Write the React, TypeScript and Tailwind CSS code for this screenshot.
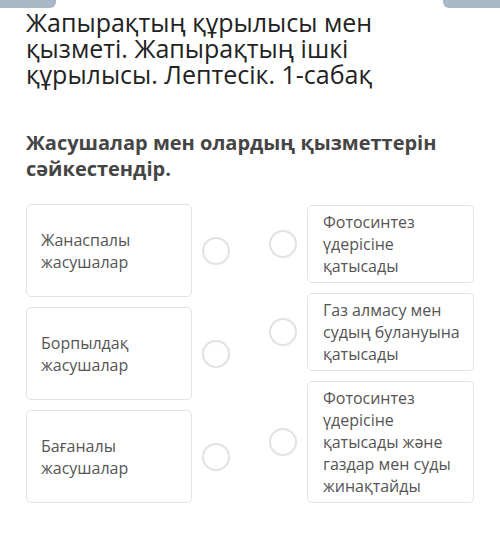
const leftItems = ['Жанаспалы жасушалар', 'Борпылдақ жасушалар', 'Бағаналы жасушалар'];

const rightItems = [
  'Фотосинтез үдерісіне қатысады',
  'Газ алмасу мен судың булануына қатысады',
  'Фотосинтез үдерісіне қатысады және газдар мен суды жинақтайды',
];

function Dot() {
  return <div className="w-[28px] h-[28px] shrink-0 rounded-full border-2 border-[#e2e2e2] bg-white" />;
}

export default function App() {
  return (
    <div className="w-[500px] h-[546px] bg-white overflow-hidden" style={{ fontFamily: '"Open Sans", "Noto Sans", sans-serif' }}>
      {/* top tabs, cut off by the scroll */}
      <div className="flex justify-between h-[8px]">
        <div className="w-[56px] h-full bg-[#a9b8c6] rounded-br-[6px]" />
        <div className="w-[57px] h-full bg-[#a9b8c6] rounded-bl-[6px]" />
      </div>

      <div className="px-[26px]">
        <h1 className="mt-[1px] text-[25px] leading-[26px] text-[#222] font-normal">
          Жапырақтың құрылысы мен қызметі. Жапырақтың ішкі құрылысы. Лептесік. 1-сабақ
        </h1>

        <h2 className="mt-[43px] text-[20px] leading-[26px] font-bold text-[#454545]">
          Жасушалар мен олардың қызметтерін сәйкестендір.
        </h2>

        {/* matching pairs */}
        <div className="mt-[22px] flex">
          <div className="w-[166px] flex flex-col gap-[10px]">
            {leftItems.map(t => (
              <div key={t} className="flex-1 flex items-center px-[14px] border border-[#e3e3e3] rounded-[5px] text-[16px] leading-[22px] text-[#555]">
                {t}
              </div>
            ))}
          </div>
          <div className="flex flex-col gap-[10px] ml-[10px]">
            {leftItems.map(t => (
              <div key={t} className="flex-1 flex items-center">
                <Dot />
              </div>
            ))}
          </div>
          <div className="flex flex-col gap-[10px] ml-[39px] mt-[1px]">
            {rightItems.map(t => (
              <div key={t} className="flex items-center gap-[10px]">
                <Dot />
                <div className="w-[167px] pl-[15px] pr-[8px] py-[5px] border border-[#e3e3e3] rounded-[5px] text-[16px] leading-[22px] text-[#555]">
                  {t}
                </div>
              </div>
            ))}
          </div>
        </div>
      </div>
    </div>
  );
}
